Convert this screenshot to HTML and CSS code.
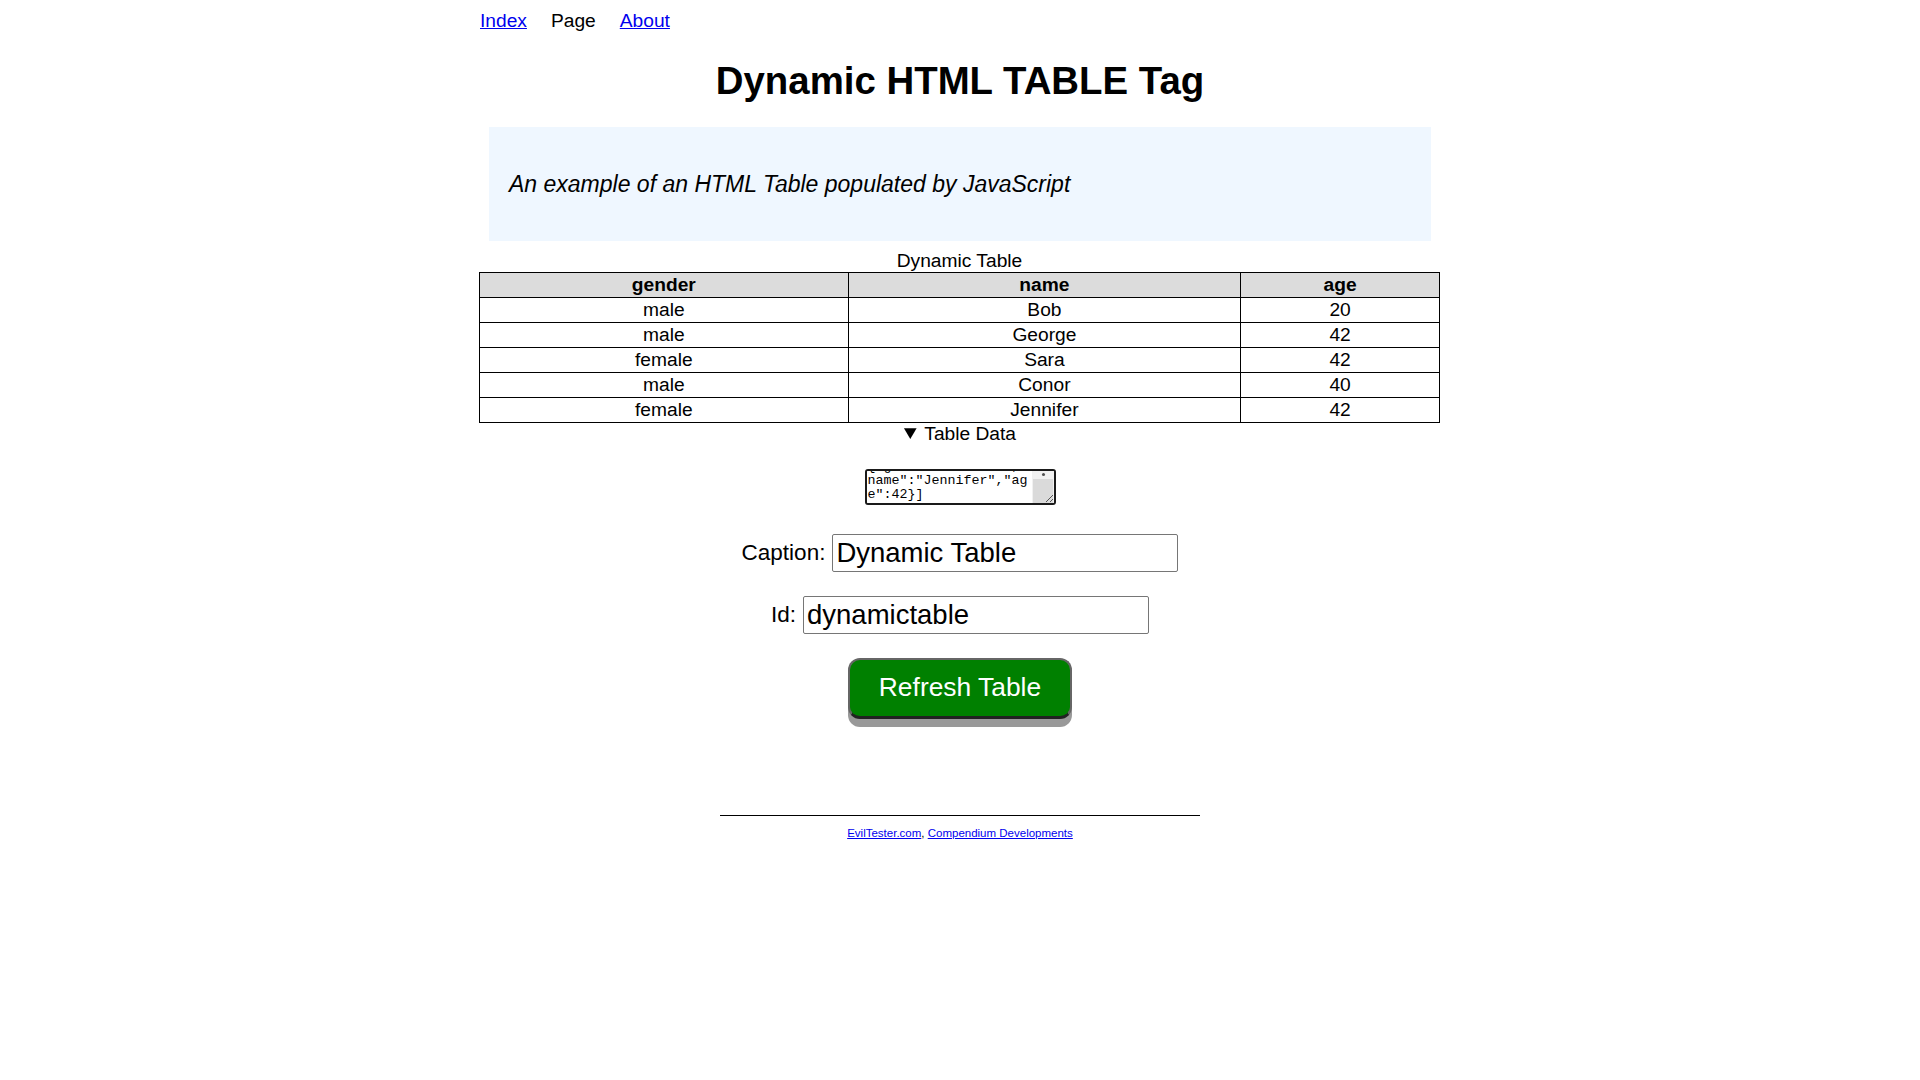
FILE: index.html
```html
<!DOCTYPE html>
<html lang="en">
<head>
<meta charset="utf-8">
<title>Dynamic HTML TABLE Tag</title>
<link rel="stylesheet" href="styles.css">
</head>
<body>
<div class="page">
  <nav class="nav">
    <a href="#">Index</a>
    <span>Page</span>
    <a href="#">About</a>
  </nav>
  <h1 class="title">Dynamic HTML TABLE Tag</h1>
  <div class="intro">
    <p>An example of an HTML Table populated by JavaScript</p>
  </div>
  <table class="data" id="dynamictable">
    <caption>Dynamic Table</caption>
    <colgroup>
      <col class="c-gender">
      <col class="c-name">
      <col class="c-age">
    </colgroup>
    <thead>
      <tr><th>gender</th><th>name</th><th>age</th></tr>
    </thead>
    <tbody>
      <tr><td>male</td><td>Bob</td><td>20</td></tr>
      <tr><td>male</td><td>George</td><td>42</td></tr>
      <tr><td>female</td><td>Sara</td><td>42</td></tr>
      <tr><td>male</td><td>Conor</td><td>40</td></tr>
      <tr><td>female</td><td>Jennifer</td><td>42</td></tr>
    </tbody>
  </table>
  <details class="details" open>
    <summary>Table Data</summary>
    <div class="json-wrap">
      <div class="json-box">
        <textarea class="json" id="jsondata">[{"gender":"male","name":"Bob","age":20},{"gender":"male","name":"George","age":42},{"gender":"female","name":"Sara","age":42},{"gender":"male","name":"Conor","age":40},{"gender":"female","name":"Jennifer","age":42}]</textarea>
        <div class="vscroll">
          <span class="vscroll-up"></span>
          <span class="vscroll-thumb"></span>
          <svg class="grip" width="10" height="10" viewBox="0 0 10 10"><path d="M9 2 L2 9 M9 6 L6 9" stroke="#555" stroke-width="1" fill="none"/></svg>
        </div>
      </div>
    </div>
  </details>
  <div class="form">
    <div class="row">
      <label for="caption">Caption:</label>
      <input class="field" id="caption" type="text" value="Dynamic Table">
    </div>
    <div class="row">
      <label for="tableid">Id:</label>
      <input class="field" id="tableid" type="text" value="dynamictable">
    </div>
    <div class="row">
      <button class="refresh" type="button">Refresh Table</button>
    </div>
  </div>
  <footer class="footer">
    <hr class="rule">
    <p class="credits"><a href="#">EvilTester.com</a>, <a href="#">Compendium Developments</a></p>
  </footer>
</div>
<script src="script.js"></script>
</body>
</html>
```

FILE: styles.css
```css
html, body {
  margin: 0;
  padding: 0;
  background: #fff;
}
body {
  font-family: "Liberation Sans", Arial, sans-serif;
  font-size: 19.2px;
  color: #000;
}
.page {
  width: 960px;
  margin: 0 auto;
  padding-top: 9.6px;
}
.nav {
  display: flex;
  gap: 24px;
  line-height: 22px;
}
.nav a {
  color: #0000ee;
  text-decoration: underline;
}
.title {
  font-size: 38.4px;
  font-weight: bold;
  text-align: center;
  margin: 27.7px 0 23.7px;
  line-height: 44px;
}
.intro {
  background: #eff7ff;
  margin: 0 9px;
  padding: 21px 20px;
}
.intro p {
  margin: 23px 0;
  font-size: 23px;
  font-style: italic;
  line-height: 26px;
}
.data {
  width: 961px;
  margin: 9px 0 0 -1px;
  border-collapse: collapse;
  text-align: center;
}
.data caption {
  line-height: 22px;
}
.c-gender { width: 369px; }
.c-name { width: 393px; }
.c-age { width: 199px; }
.data th, .data td {
  border: 1px solid #000;
  padding: 1px;
  line-height: 22px;
}
.data th {
  background: #dcdcdc;
  font-weight: bold;
}
.details {
  text-align: center;
}
.details summary {
  line-height: 22px;
  cursor: pointer;
}
.json-wrap {
  margin-top: 24px;
  line-height: 0;
}
.json-box {
  display: inline-flex;
  box-sizing: border-box;
  width: 191px;
  height: 36px;
  border: 2px solid #1a1a1a;
  border-radius: 3px;
  overflow: hidden;
  vertical-align: top;
  background: #fff;
}
.json {
  box-sizing: border-box;
  width: 165px;
  height: 32px;
  border: 0;
  margin: 0;
  padding: 1px 0 1px 1px;
  font-family: "Liberation Mono", "Courier New", monospace;
  font-size: 13.33px;
  line-height: 14px;
  resize: none;
  overflow: hidden;
  outline: none;
  color: #000;
  background: #fff;
}
.vscroll {
  position: relative;
  display: flex;
  flex-direction: column;
  width: 22px;
  background: #f1f1f1;
}
.vscroll-up {
  position: relative;
  display: block;
  height: 8px;
  background: #f1f1f1;
}
.vscroll-up::after {
  content: "";
  position: absolute;
  left: 10px;
  top: 2px;
  width: 3px;
  height: 3px;
  border-radius: 50%;
  background: #505050;
}
.vscroll-thumb {
  display: block;
  flex: 1;
  background: #dadada;
  margin: 0 1px;
}
.grip {
  position: absolute;
  right: 0;
  bottom: 0;
}
.form {
  display: flex;
  flex-direction: column;
  align-items: center;
  gap: 24px;
  margin-top: 29px;
}
.row {
  display: flex;
  align-items: center;
  gap: 7px;
}
.row label {
  font-size: 22.5px;
}
.field {
  box-sizing: border-box;
  width: 346px;
  height: 38px;
  border: 1px solid #767676;
  border-radius: 2px;
  padding: 1px 3px;
  font-family: "Liberation Sans", Arial, sans-serif;
  font-size: 27.5px;
  color: #000;
}
.refresh {
  box-sizing: border-box;
  width: 224px;
  height: 61px;
  background: #008000;
  color: #fff;
  font-family: "Liberation Sans", Arial, sans-serif;
  font-size: 26.4px;
  border: 2px solid #666;
  border-bottom: 3px solid #222;
  border-radius: 12px;
  box-shadow: 0 8px 0 #999;
  padding: 0;
  cursor: pointer;
}
.footer {
  margin-top: 96px;
  text-align: center;
}
.rule {
  width: 480px;
  margin: 0 auto;
  border: 0;
  border-top: 1px solid #000;
  height: 0;
}
.credits {
  margin: 11px 0;
  font-size: 11.5px;
  line-height: 13px;
}
.credits a {
  color: #0000ee;
}
```

FILE: script.js
```js
var ta = document.getElementById('jsondata');
ta.scrollTop = ta.scrollHeight;
```
